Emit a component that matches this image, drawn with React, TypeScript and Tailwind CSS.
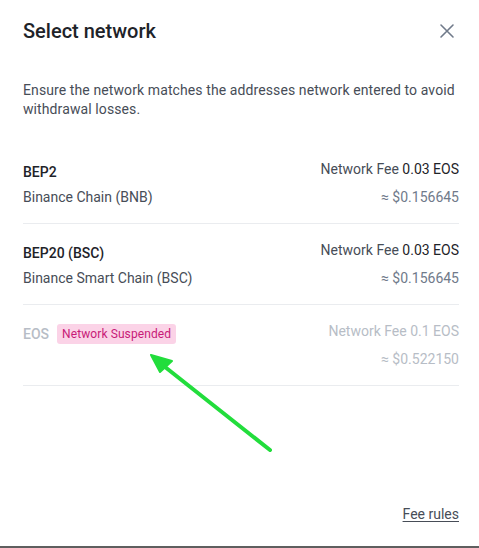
const NETWORKS = [
  { id: 'BEP2', name: 'Binance Chain (BNB)', fee: '0.03', usd: '0.156645', suspended: false },
  { id: 'BEP20 (BSC)', name: 'Binance Smart Chain (BSC)', fee: '0.03', usd: '0.156645', suspended: false },
  { id: 'EOS', name: '', fee: '0.1', usd: '0.522150', suspended: true },
]

function CloseIcon() {
  return (
    <svg className="w-[16px] h-[16px] text-[#707a8a]" viewBox="0 0 16 16" fill="none" stroke="currentColor">
      <path strokeWidth={1.6} strokeLinecap="round" d="M2 2l12 12M14 2L2 14" />
    </svg>
  )
}

export default function App() {
  return (
    <div
      className="relative w-[479px] h-[548px] bg-white flex flex-col border-b-2 border-[#5f5f5f] overflow-hidden"
      style={{ fontFamily: 'Roboto, "Liberation Sans", sans-serif' }}
    >
      {/* Header */}
      <div className="flex items-center justify-between pl-[23px] pr-[20px] h-[62px]">
        <h1 className="text-[20px] font-medium text-[#1e2329]">Select network</h1>
        <button className="mr-[4px]"><CloseIcon /></button>
      </div>

      <p className="pl-[23px] pr-[20px] mt-[19px] text-[14px] leading-[19px] tracking-[0.1px] text-[#474d57]">
        Ensure the network matches the addresses network entered to avoid withdrawal losses.
      </p>

      {/* Network list */}
      <div className="mt-[24px] pl-[23px] pr-[20px]">
        {NETWORKS.map((n) => (
          <div key={n.id} className="flex justify-between pt-[12px] pb-[12px] border-b border-[#eaecef]">
            <div className="pt-[7px] flex flex-col gap-[5px]">
              {n.suspended ? (
                <div className="flex items-center gap-[8px] h-[20px]">
                  <span className="text-[14px] font-medium text-[#b7bdc6]">{n.id}</span>
                  <span className="px-[5px] h-[20px] leading-[20px] rounded-[3px] bg-[#fbd3e7] text-[12px] tracking-[0.1px] text-[#c81b78]">
                    Network Suspended
                  </span>
                </div>
              ) : (
                <>
                  <span className="text-[14px] leading-[20px] font-medium text-[#1e2329]">{n.id}</span>
                  <span className="text-[14px] leading-[20px] text-[#474d57]">{n.name}</span>
                </>
              )}
            </div>
            <div className="flex flex-col items-end text-[14px] leading-[28px]">
              <span className={n.suspended ? 'text-[#b7bdc6]' : 'text-[#474d57]'}>
                Network Fee <span className={n.suspended ? '' : 'text-[#1e2329]'}>{n.fee} EOS</span>
              </span>
              <span className={n.suspended ? 'text-[#b7bdc6]' : 'text-[#707a8a]'}>≈ ${n.usd}</span>
            </div>
          </div>
        ))}
      </div>

      <div className="flex-1" />

      <div className="flex justify-end pr-[20px] pb-[22px]">
        <a className="text-[14px] leading-[20px] text-[#474d57] underline underline-offset-2">Fee rules</a>
      </div>

      {/* annotation arrow */}
      <svg className="absolute left-0 top-0 w-[479px] h-[548px] pointer-events-none" viewBox="0 0 479 548">
        <line x1="270" y1="450" x2="160" y2="363" stroke="#22dd3c" strokeWidth={4} strokeLinecap="round" />
        <path d="M151 355 L172 361 L160 372 Z" fill="#22dd3c" stroke="#22dd3c" strokeWidth={2} strokeLinejoin="round" />
      </svg>
    </div>
  )
}
